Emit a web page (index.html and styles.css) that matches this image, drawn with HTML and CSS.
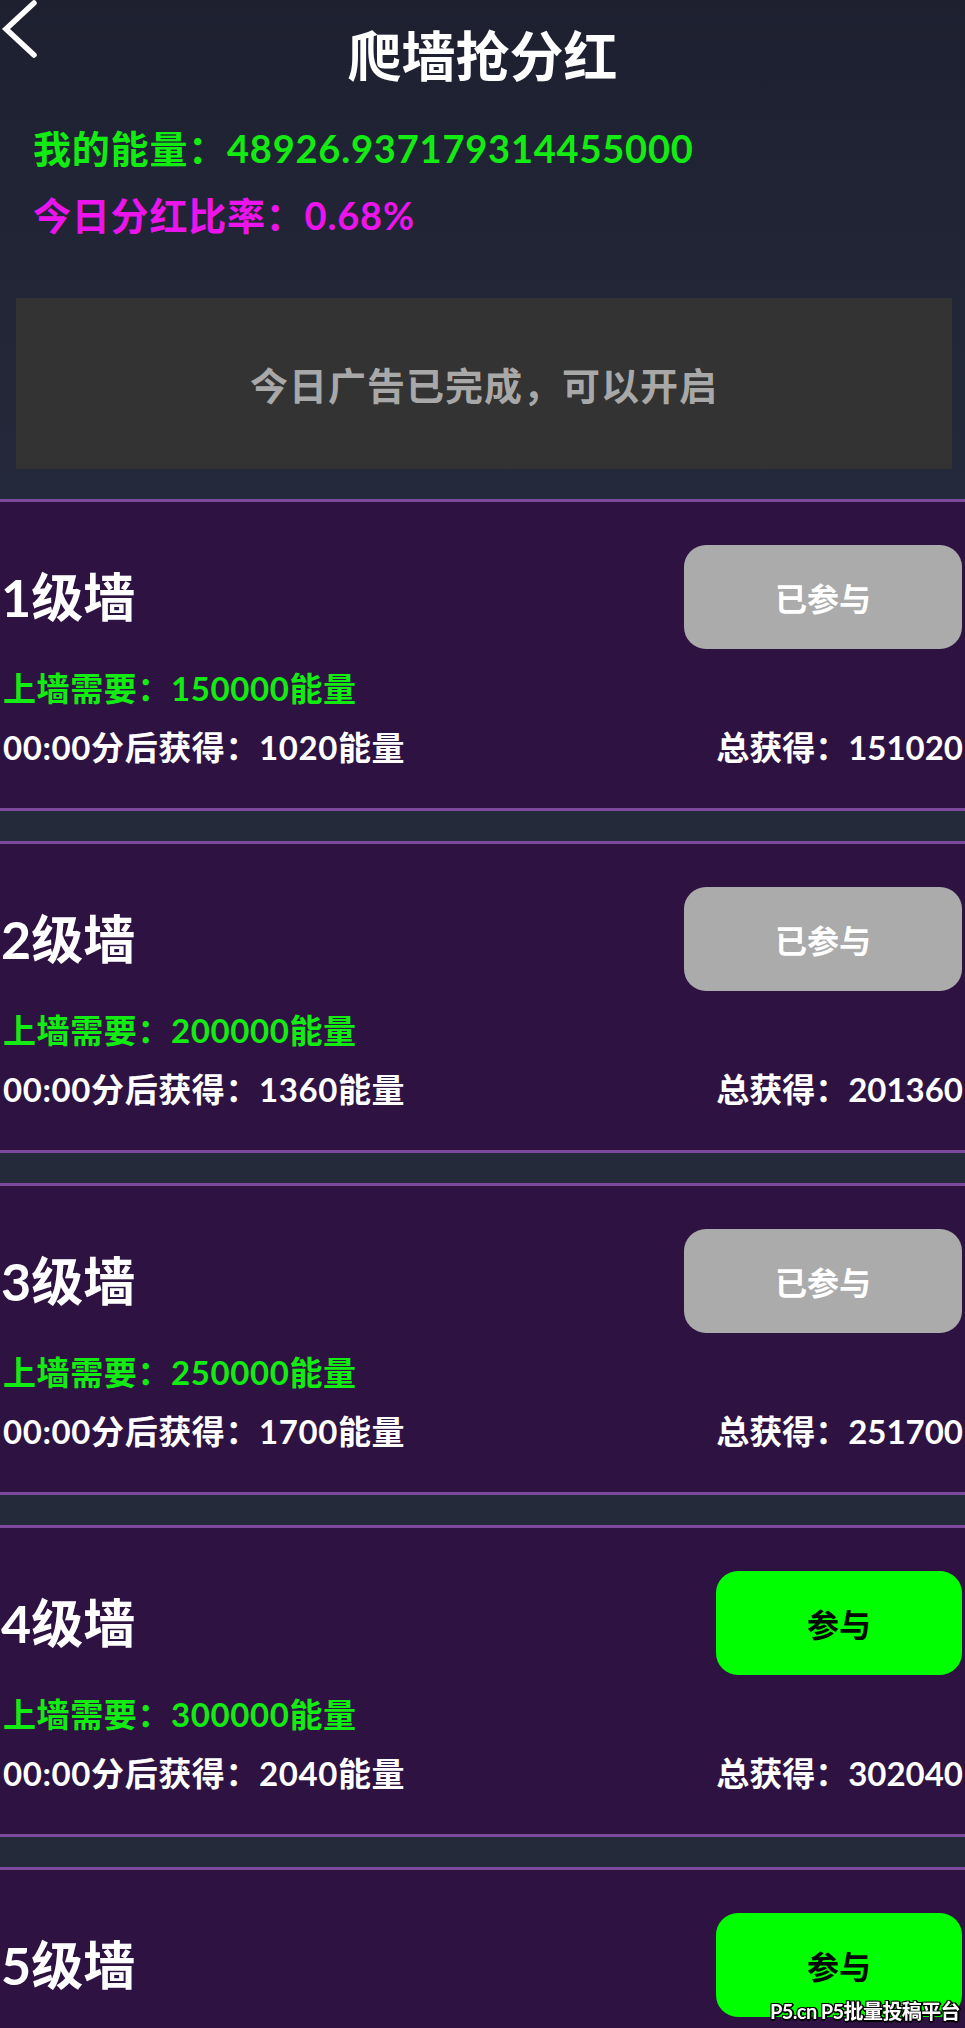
FILE: index.html
```html
<!DOCTYPE html>
<html lang="zh-CN">
<head>
<meta charset="utf-8">
<title>爬墙抢分红</title>
<link rel="stylesheet" href="styles.css">
</head>
<body>
<div class="page">
  <header class="top">
    <div class="topbar">
      <a class="back" href="#" aria-label="返回">
        <svg width="40" height="60" viewBox="0 0 40 60"><path d="M34 3 L6 29 L34 55" fill="none" stroke="#fff" stroke-width="5.5" stroke-linecap="round" stroke-linejoin="miter"/></svg>
      </a>
      <h1 class="title">爬墙抢分红</h1>
      <span class="spacer"></span>
    </div>
    <div class="info">
      <div class="energy">我的能量：48926.937179314455000</div>
      <div class="rate">今日分红比率：0.68%</div>
    </div>
    <div class="ad">今日广告已完成，可以开启</div>
  </header>

  <section class="walls">
    <div class="wall">
      <div class="wall-head">
        <div class="wall-name">1级墙</div>
        <button class="btn btn-done">已参与</button>
      </div>
      <div class="need">上墙需要：150000能量</div>
      <div class="earn"><span>00:00分后获得：1020能量</span><span class="total">总获得：151020</span></div>
    </div>
    <div class="wall">
      <div class="wall-head">
        <div class="wall-name">2级墙</div>
        <button class="btn btn-done">已参与</button>
      </div>
      <div class="need">上墙需要：200000能量</div>
      <div class="earn"><span>00:00分后获得：1360能量</span><span class="total">总获得：201360</span></div>
    </div>
    <div class="wall">
      <div class="wall-head">
        <div class="wall-name">3级墙</div>
        <button class="btn btn-done">已参与</button>
      </div>
      <div class="need">上墙需要：250000能量</div>
      <div class="earn"><span>00:00分后获得：1700能量</span><span class="total">总获得：251700</span></div>
    </div>
    <div class="wall">
      <div class="wall-head">
        <div class="wall-name">4级墙</div>
        <button class="btn btn-join">参与</button>
      </div>
      <div class="need">上墙需要：300000能量</div>
      <div class="earn"><span>00:00分后获得：2040能量</span><span class="total">总获得：302040</span></div>
    </div>
    <div class="wall">
      <div class="wall-head">
        <div class="wall-name">5级墙</div>
        <button class="btn btn-join">参与</button>
      </div>
      <div class="need">上墙需要：350000能量</div>
      <div class="earn"><span>00:00分后获得：2380能量</span><span class="total">总获得：352380</span></div>
    </div>
  </section>
</div>
<div class="watermark">P5.cn P5批量投稿平台</div>
</body>
</html>
```

FILE: styles.css
```css
* { box-sizing: border-box; }
html, body { margin: 0; padding: 0; }
body {
  background: #252a3a;
  font-family: "Lato", "Noto Sans CJK SC", sans-serif;
  font-weight: 700;
  color: #fff;
  overflow-x: hidden;
}
.page {
  width: 965px;
}
.top {
  background: linear-gradient(#1e2030, #242a3b);
  padding-bottom: 30px;
}
.topbar {
  display: grid;
  grid-template-columns: 40px 1fr 40px;
  align-items: start;
}
.back { display: block; width: 40px; height: 60px; }
.back svg { display: block; }
.title {
  margin: 25px 0 0;
  font-size: 54px;
  line-height: 64px;
  font-weight: 700;
  text-align: center;
}
.info {
  margin-top: 26px;
  padding-left: 33px;
  font-size: 38px;
  line-height: 67px;
  letter-spacing: 0.8px;
}
.energy { color: #12ec12; }
.rate { color: #ec14ec; }
.ad {
  margin: 49px 13px 0 16px;
  height: 171px;
  background: #333333;
  color: #a8a8a8;
  font-size: 38px;
  display: flex;
  align-items: center;
  justify-content: center;
  letter-spacing: 1px;
}
.walls {
  display: flex;
  flex-direction: column;
  gap: 30px;
}
.wall {
  background: #2e1242;
  border-top: 3px solid #7c4a9c;
  border-bottom: 3px solid #7c4a9c;
  padding: 43px 3px 38px 3px;
}
.wall-head {
  display: flex;
  justify-content: space-between;
  align-items: center;
  height: 104px;
}
.wall-name {
  font-size: 52px;
  line-height: 60px;
  margin-left: -2px;
}
.btn {
  height: 104px;
  padding: 0 91px;
  border: none;
  border-radius: 22px;
  font-family: inherit;
  font-weight: 700;
  font-size: 32px;
  cursor: pointer;
}
.btn-done { background: #ababab; color: #fff; }
.btn-join { background: #00ff00; color: #050a05; }
.need {
  margin-top: 16px;
  font-size: 33px;
  line-height: 46px;
  color: #12ec12;
  letter-spacing: 0.6px;
}
.earn {
  margin-top: 13px;
  display: flex;
  justify-content: space-between;
  font-size: 33px;
  line-height: 46px;
  letter-spacing: 0.6px;
}
.earn .total {
  letter-spacing: 0;
  margin-right: -1px;
}
.watermark {
  position: fixed;
  right: 5px;
  bottom: 6px;
  font-size: 20px;
  line-height: 22px;
  letter-spacing: -0.6px;
  color: #fff;
  text-shadow: -1px -1px 0 #000, 1px -1px 0 #000, -1px 1px 0 #000, 1px 1px 0 #000, 0 2px 0 #000, 2px 0 0 #000;
}
```
